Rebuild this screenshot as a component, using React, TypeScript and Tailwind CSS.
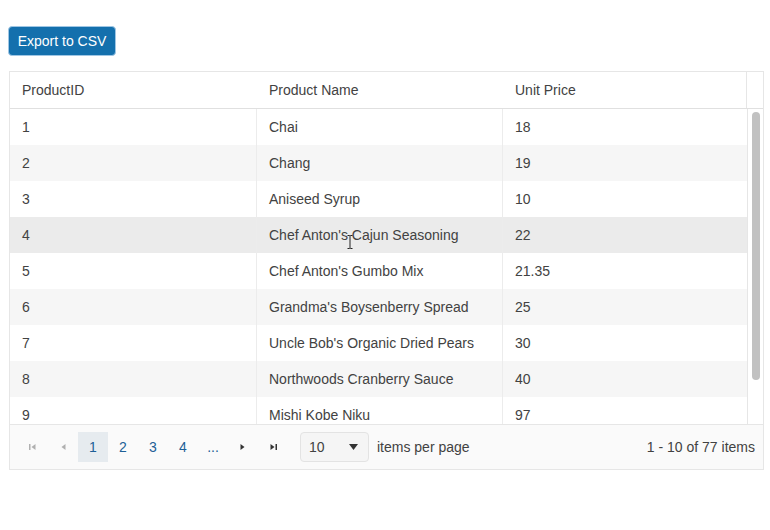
import React from 'react';

const products = [
  { id: 1, name: 'Chai', price: '18' },
  { id: 2, name: 'Chang', price: '19' },
  { id: 3, name: 'Aniseed Syrup', price: '10' },
  { id: 4, name: "Chef Anton's Cajun Seasoning", price: '22' },
  { id: 5, name: "Chef Anton's Gumbo Mix", price: '21.35' },
  { id: 6, name: "Grandma's Boysenberry Spread", price: '25' },
  { id: 7, name: "Uncle Bob's Organic Dried Pears", price: '30' },
  { id: 8, name: 'Northwoods Cranberry Sauce', price: '40' },
  { id: 9, name: 'Mishi Kobe Niku', price: '97' },
];

const Arrow = ({ dir, bar, color }: { dir: 'left' | 'right'; bar?: boolean; color: string }) => (
  <svg width="10" height="10" viewBox="0 0 10 10" fill={color}>
    {dir === 'left' ? (
      <>
        {bar && <rect x="1" y="2" width="1.5" height="6" />}
        <path d="M7.5 2 L7.5 8 L3.5 5 Z" />
      </>
    ) : (
      <>
        <path d="M2.5 2 L2.5 8 L6.5 5 Z" />
        {bar && <rect x="7.5" y="2" width="1.5" height="6" />}
      </>
    )}
  </svg>
);

export default function App() {
  return (
    <div
      className="min-h-[530px] bg-white px-2 pt-[26px] text-[14px] text-[#424242]"
      style={{ fontFamily: '"Liberation Sans", Arial, Helvetica, sans-serif' }}
    >
      <button className="h-[30px] w-[108px] rounded-[4px] border border-[#9fc6e4] bg-[#1470ad] text-[14px] text-white">
        Export to CSV
      </button>

      <div className="mt-[15px] ml-px flex w-[755px] flex-col border border-[#e6e6e6]">
        {/* header */}
        <div className="flex h-[37px] border-b border-[#e0e0e0]">
          <div className="flex w-[247px] items-center pl-3">ProductID</div>
          <div className="flex w-[246px] items-center pl-3">Product Name</div>
          <div className="flex w-[243px] items-center pl-3">Unit Price</div>
          <div className="flex-1 border-l border-[#e6e6e6]" />
        </div>

        {/* body */}
        <div className="relative flex h-[315px] overflow-hidden">
          <div className="w-[738px] border-r border-[#e6e6e6]">
            {products.map((p, i) => (
              <div
                key={p.id}
                className={`flex h-[36px] shrink-0 ${
                  i === 3 ? 'bg-[#ebebeb]' : i % 2 === 1 ? 'bg-[#f6f6f6]' : 'bg-white'
                }`}
              >
                <div className="flex w-[247px] items-center border-r border-[#ececec] pl-3">{p.id}</div>
                <div className="flex w-[246px] items-center border-r border-[#ececec] pl-3">{p.name}</div>
                <div className="flex flex-1 items-center pl-3">{p.price}</div>
              </div>
            ))}
          </div>
          <div className="flex flex-1 justify-center pt-[3px]">
            <div className="h-[268px] w-[8px] rounded-full bg-[#c1c1c1]" />
          </div>
          {/* text cursor */}
          <svg className="absolute left-[337px] top-[126px]" width="6" height="14" viewBox="0 0 6 14">
            <path d="M0.5 0.5 H2.5 L3 1 L3.5 0.5 H5.5 M3 1 V13 M0.5 13.5 H2.5 L3 13 L3.5 13.5 H5.5" stroke="#222" strokeWidth="1" fill="none" />
          </svg>
        </div>

        {/* pager */}
        <div className="flex h-[45px] items-center border-t border-[#e6e6e6] bg-[#fafafa] pl-2 pr-2">
          <div className="flex h-[30px] w-[30px] items-center justify-center">
            <Arrow dir="left" bar color="#b0b0b0" />
          </div>
          <div className="flex h-[30px] w-[30px] items-center justify-center">
            <Arrow dir="left" color="#b0b0b0" />
          </div>
          <div className="flex h-[30px] w-[30px] items-center justify-center bg-[#e6ebef] text-[#1d5f96]">1</div>
          {['2', '3', '4', '...'].map((n) => (
            <div key={n} className="flex h-[30px] w-[30px] items-center justify-center text-[#1d5f96]">
              {n}
            </div>
          ))}
          <div className="flex h-[30px] w-[30px] items-center justify-center">
            <Arrow dir="right" color="#333" />
          </div>
          <div className="flex h-[30px] w-[30px] items-center justify-center">
            <Arrow dir="right" bar color="#333" />
          </div>
          <div className="ml-3 flex h-[30px] w-[69px] items-center justify-between rounded-[4px] border border-[#e3e3e3] bg-[#f5f5f5] pl-2 pr-[10px]">
            <span>10</span>
            <svg width="9" height="6" viewBox="0 0 9 6" fill="#333">
              <path d="M0 0 H9 L4.5 6 Z" />
            </svg>
          </div>
          <span className="ml-2">items per page</span>
          <span className="ml-auto">1 - 10 of 77 items</span>
        </div>
      </div>
    </div>
  );
}
